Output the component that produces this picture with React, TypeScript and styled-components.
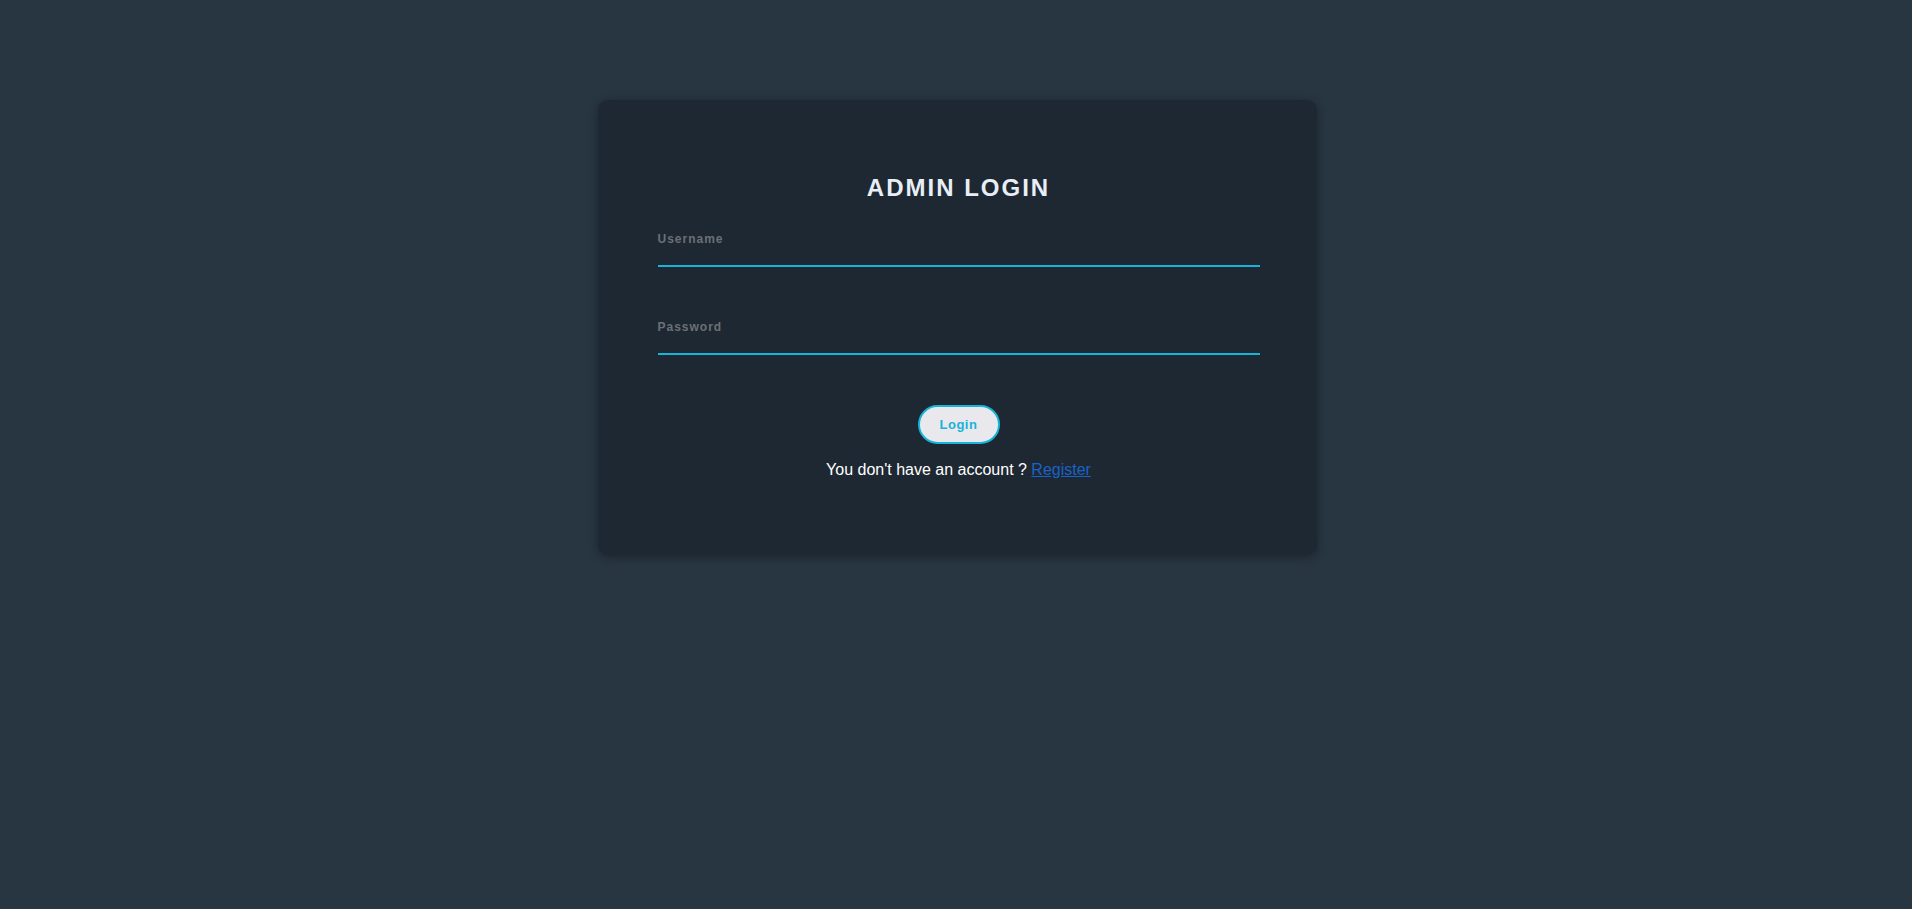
import React from "react";
import styled, { createGlobalStyle } from "styled-components";

const GlobalStyle = createGlobalStyle`
  html, body {
    margin: 0;
    padding: 0;
    background: #283642;
    font-family: "Liberation Sans", Arial, sans-serif;
  }
  body {
    min-height: 909px;
  }
`;

const Page = styled.div`
  display: flex;
  justify-content: center;
  align-items: flex-start;
  padding-top: 100px;
  padding-left: 2px;
  min-height: 809px;
  box-sizing: border-box;
`;

const Card = styled.form`
  width: 719px;
  box-sizing: border-box;
  padding: 74px 57px 76px 60px;
  background: #1e2832;
  border-radius: 10px;
  box-shadow: 0 2px 10px rgba(0, 0, 0, 0.35);
  display: flex;
  flex-direction: column;
`;

const Title = styled.h2`
  margin: 0 0 30px;
  text-align: center;
  font-size: 24px;
  font-weight: 700;
  letter-spacing: 2px;
  color: #e8eef6;
  line-height: normal;
`;

const Field = styled.div<{ $gap: number }>`
  display: flex;
  flex-direction: column;
  margin-bottom: ${(p) => p.$gap}px;
`;

const Label = styled.label`
  font-size: 12px;
  font-weight: 700;
  letter-spacing: 1px;
  color: #6c7075;
  line-height: normal;
`;

const Input = styled.input`
  height: 21px;
  box-sizing: border-box;
  border: none;
  border-bottom: 2px solid #17b3d9;
  background: transparent;
  outline: none;
  color: #e8eef6;
  font-family: inherit;
  font-size: 14px;
  padding: 0;
`;

const Actions = styled.div`
  display: flex;
  flex-direction: column;
  align-items: center;
  gap: 17px;
`;

const Button = styled.button`
  width: 82px;
  height: 39px;
  box-sizing: border-box;
  border: 2px solid #17b3d9;
  border-radius: 20px;
  background: #e9e9ed;
  color: #17b3d9;
  font-family: inherit;
  font-size: 13px;
  font-weight: 700;
  letter-spacing: 0.5px;
  cursor: pointer;
  padding: 0;
`;

const Footer = styled.p`
  margin: 0;
  font-size: 16px;
  color: #ffffff;
  line-height: normal;
`;

const Link = styled.a`
  color: #1a62c9;
  text-decoration: underline;
`;

export default function App() {
  return (
    <>
      <GlobalStyle />
      <Page>
        <Card onSubmit={(e) => e.preventDefault()}>
          <Title>ADMIN LOGIN</Title>
          <Field $gap={53}>
            <Label htmlFor="username">Username</Label>
            <Input id="username" type="text" />
          </Field>
          <Field $gap={50}>
            <Label htmlFor="password">Password</Label>
            <Input id="password" type="password" />
          </Field>
          <Actions>
            <Button type="submit">Login</Button>
            <Footer>
              You don't have an account ? <Link href="#">Register</Link>
            </Footer>
          </Actions>
        </Card>
      </Page>
    </>
  );
}
